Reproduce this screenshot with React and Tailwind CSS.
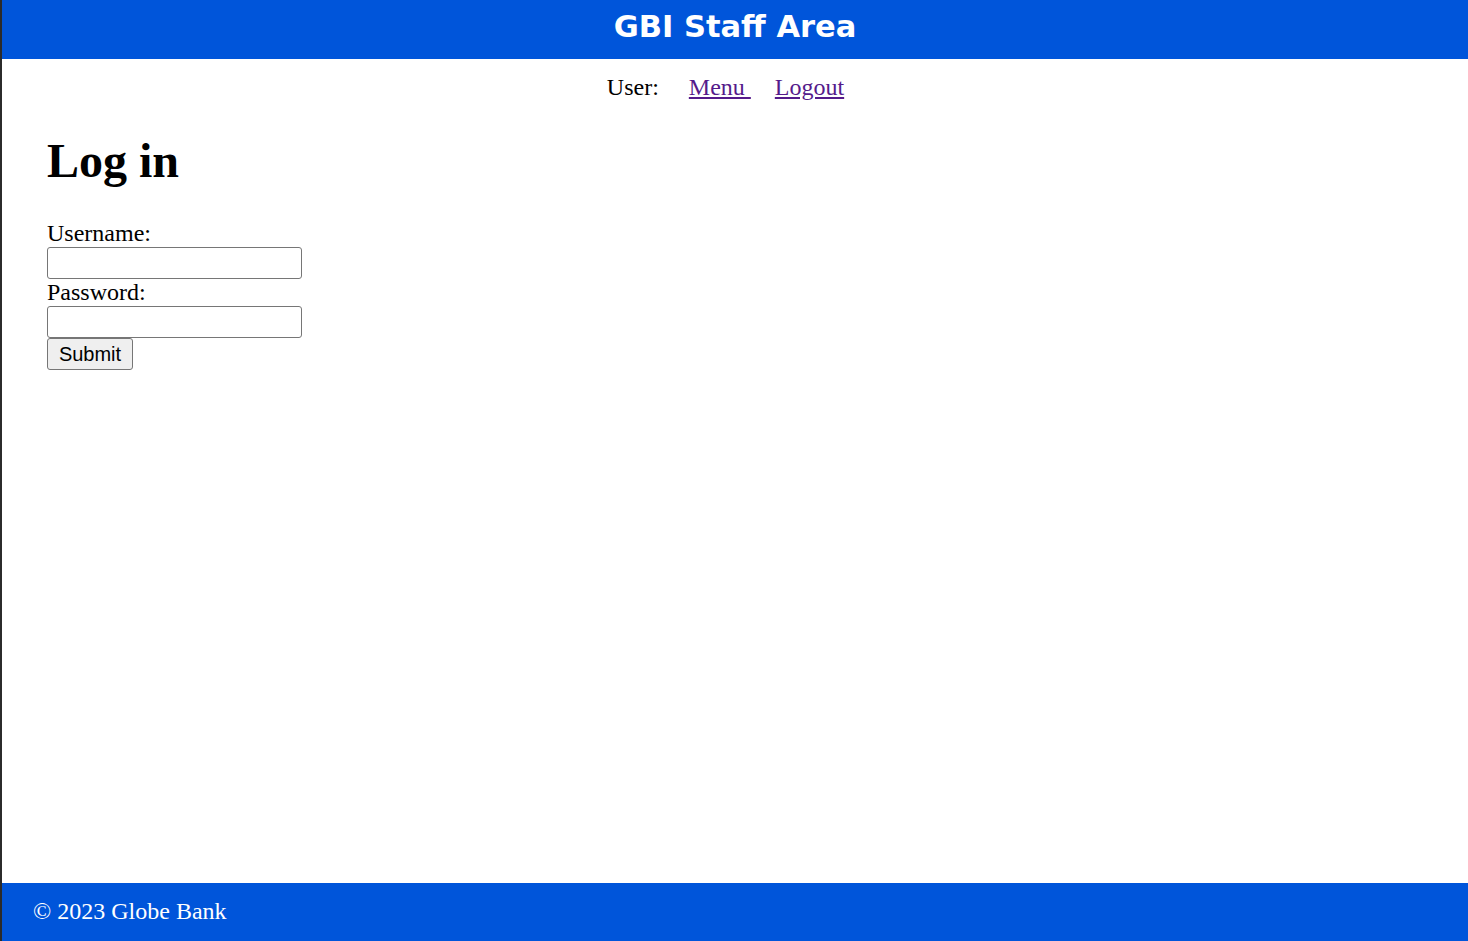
export default function App() {
  return (
    <div className="min-h-screen flex flex-col border-l-2 border-[#2b2b2b] bg-white text-black font-['Liberation_Serif',serif] text-[24px] leading-[27.6px]">
      <header className="h-[59px] pt-[9px] bg-[#0055da] text-center">
        <h1 className="font-['DejaVu_Sans',sans-serif] font-bold text-white text-[30.5px] leading-[36px]">GBI Staff Area</h1>
      </header>

      <nav className="pt-[15px] flex justify-center pr-[19px]">
        <span>User:</span>
        <a href="#" className="ml-[30px] text-[#551a8b] underline whitespace-pre">Menu </a>
        <a href="#" className="ml-[24px] text-[#551a8b] underline">Logout</a>
      </nav>

      <main className="flex-1 pl-[45px]">
        <h1 className="mt-[31px] mb-[32px] text-[48px] leading-[55px] font-bold">Log in</h1>
        <form onSubmit={(e) => e.preventDefault()}>
          <label className="block leading-[27px]">Username:</label>
          <input type="text" className="block w-[255px] h-[32px] border border-[#767676] rounded-[3px] bg-white" />
          <label className="block leading-[27px]">Password:</label>
          <input type="password" className="block w-[255px] h-[32px] border border-[#767676] rounded-[3px] bg-white" />
          <button type="submit" className="block w-[86px] h-[32px] border border-[#767676] rounded-[3px] bg-[#efefef] font-['Liberation_Sans',sans-serif] text-[20px] leading-none">
            Submit
          </button>
        </form>
      </main>

      <footer className="h-[58px] flex items-center pl-[31px] bg-[#0055da] text-white">
        © 2023 Globe Bank
      </footer>
    </div>
  );
}
